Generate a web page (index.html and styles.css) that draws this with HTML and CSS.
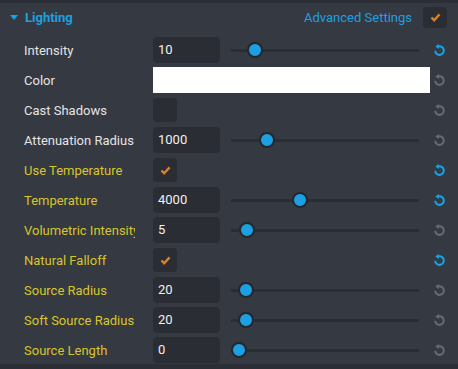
FILE: index.html
```html
<!DOCTYPE html>
<html lang="en">
<head>
    <meta charset="UTF-8">
    <title>Lighting</title>
    <link rel="stylesheet" href="styles.css">
</head>
<body>
    <div class="panel">
        <div class="header">
            <span class="caret"></span>
            <span class="title">Lighting</span>
            <span class="advanced">Advanced Settings</span>
            <span class="check header-check"><svg viewBox="0 0 12 10"><polyline points="1.5,5 4.5,8 10.5,1.5"/></svg></span>
        </div>

        <div class="rows">
            <div class="row">
                <span class="label">Intensity</span>
                <span class="field">10</span>
                <div class="slider"><span class="thumb" style="left: 13%"></span></div>
                <svg class="reset on" viewBox="0 0 14 14"><path d="M6.2 2.6 A4.6 4.6 0 1 1 2.4 7.2"/><polygon points="6.4,0 6.4,5.4 2.4,2.7"/></svg>
            </div>
            <div class="row">
                <span class="label">Color</span>
                <span class="color-box"></span>
                <svg class="reset" viewBox="0 0 14 14"><path d="M6.2 2.6 A4.6 4.6 0 1 1 2.4 7.2"/><polygon points="6.4,0 6.4,5.4 2.4,2.7"/></svg>
            </div>
            <div class="row">
                <span class="label">Cast Shadows</span>
                <span class="check"></span>
                <span class="spacer"></span>
                <svg class="reset" viewBox="0 0 14 14"><path d="M6.2 2.6 A4.6 4.6 0 1 1 2.4 7.2"/><polygon points="6.4,0 6.4,5.4 2.4,2.7"/></svg>
            </div>
            <div class="row">
                <span class="label">Attenuation Radius</span>
                <span class="field">1000</span>
                <div class="slider"><span class="thumb" style="left: 19%"></span></div>
                <svg class="reset" viewBox="0 0 14 14"><path d="M6.2 2.6 A4.6 4.6 0 1 1 2.4 7.2"/><polygon points="6.4,0 6.4,5.4 2.4,2.7"/></svg>
            </div>
            <div class="row">
                <span class="label adv">Use Temperature</span>
                <span class="check"><svg viewBox="0 0 12 10"><polyline points="1.5,5 4.5,8 10.5,1.5"/></svg></span>
                <span class="spacer"></span>
                <svg class="reset on" viewBox="0 0 14 14"><path d="M6.2 2.6 A4.6 4.6 0 1 1 2.4 7.2"/><polygon points="6.4,0 6.4,5.4 2.4,2.7"/></svg>
            </div>
            <div class="row">
                <span class="label adv">Temperature</span>
                <span class="field">4000</span>
                <div class="slider"><span class="thumb" style="left: 36.5%"></span></div>
                <svg class="reset on" viewBox="0 0 14 14"><path d="M6.2 2.6 A4.6 4.6 0 1 1 2.4 7.2"/><polygon points="6.4,0 6.4,5.4 2.4,2.7"/></svg>
            </div>
            <div class="row">
                <span class="label adv">Volumetric Intensity</span>
                <span class="field">5</span>
                <div class="slider"><span class="thumb" style="left: 8.5%"></span></div>
                <svg class="reset" viewBox="0 0 14 14"><path d="M6.2 2.6 A4.6 4.6 0 1 1 2.4 7.2"/><polygon points="6.4,0 6.4,5.4 2.4,2.7"/></svg>
            </div>
            <div class="row">
                <span class="label adv">Natural Falloff</span>
                <span class="check"><svg viewBox="0 0 12 10"><polyline points="1.5,5 4.5,8 10.5,1.5"/></svg></span>
                <span class="spacer"></span>
                <svg class="reset on" viewBox="0 0 14 14"><path d="M6.2 2.6 A4.6 4.6 0 1 1 2.4 7.2"/><polygon points="6.4,0 6.4,5.4 2.4,2.7"/></svg>
            </div>
            <div class="row">
                <span class="label adv">Source Radius</span>
                <span class="field">20</span>
                <div class="slider"><span class="thumb" style="left: 8%"></span></div>
                <svg class="reset" viewBox="0 0 14 14"><path d="M6.2 2.6 A4.6 4.6 0 1 1 2.4 7.2"/><polygon points="6.4,0 6.4,5.4 2.4,2.7"/></svg>
            </div>
            <div class="row">
                <span class="label adv">Soft Source Radius</span>
                <span class="field">20</span>
                <div class="slider"><span class="thumb" style="left: 8%"></span></div>
                <svg class="reset" viewBox="0 0 14 14"><path d="M6.2 2.6 A4.6 4.6 0 1 1 2.4 7.2"/><polygon points="6.4,0 6.4,5.4 2.4,2.7"/></svg>
            </div>
            <div class="row">
                <span class="label adv">Source Length</span>
                <span class="field">0</span>
                <div class="slider"><span class="thumb" style="left: 4.3%"></span></div>
                <svg class="reset" viewBox="0 0 14 14"><path d="M6.2 2.6 A4.6 4.6 0 1 1 2.4 7.2"/><polygon points="6.4,0 6.4,5.4 2.4,2.7"/></svg>
            </div>
        </div>
    </div>
</body>
</html>
```

FILE: styles.css
```css
body {
    margin: 0;
    background-color: #2b2e35;
    font-family: Roboto, "Liberation Sans", sans-serif;
    font-size: 13px;
    color: #e4e4e4;
}
.panel {
    width: 458px;
    height: 361px;
    margin-top: 3px;
    background-color: #353941;
}
.header {
    display: flex;
    align-items: center;
    height: 29px;
    padding: 0 11px 0 10px;
}
.caret {
    width: 0;
    height: 0;
    border-left: 4px solid transparent;
    border-right: 4px solid transparent;
    border-top: 5px solid #1ca0e3;
    margin-right: 7px;
}
.title {
    color: #1ca0e3;
    font-weight: bold;
    font-size: 13px;
    flex: 1;
}
.advanced {
    color: #1ca0e3;
    margin-right: 11px;
}
.rows {
    padding-top: 3px;
}
.row {
    display: flex;
    align-items: center;
    height: 30px;
    padding: 0 12px 0 24px;
}
.label {
    flex: none;
    width: 111px;
    margin-right: 18px;
    white-space: nowrap;
    overflow: hidden;
}
.adv {
    color: #d8c52c;
}
.field {
    box-sizing: border-box;
    width: 67px;
    height: 26px;
    line-height: 26px;
    padding-left: 5px;
    background-color: #2a2d34;
    border-radius: 4px;
    color: #f0f0f0;
}
.color-box {
    flex: 1;
    height: 26px;
    background-color: #ffffff;
}
.check {
    display: flex;
    align-items: center;
    justify-content: center;
    width: 24px;
    height: 24px;
    border-radius: 4px;
    background-color: #2a2d34;
}
.check svg {
    width: 11px;
    height: 9px;
    fill: none;
    stroke: #d98128;
    stroke-width: 2.6;
}
.header-check {
    height: 21px;
}
.spacer {
    flex: 1;
}
.slider {
    position: relative;
    flex: 1;
    height: 3px;
    margin: 0 11px;
    background-color: #2a2d34;
}
.thumb {
    position: absolute;
    top: 50%;
    width: 12px;
    height: 12px;
    margin: -8px 0 0 -8px;
    border-radius: 50%;
    border: 2px solid #24272d;
    background-color: #1ca0e3;
}
.reset {
    flex: none;
    width: 13px;
    height: 13px;
    margin-left: 3px;
    fill: none;
    stroke: #676a70;
    stroke-width: 2.2;
}
.reset polygon {
    fill: #676a70;
    stroke: none;
}
.reset.on {
    stroke: #1ca0e3;
}
.reset.on polygon {
    fill: #1ca0e3;
}
```
